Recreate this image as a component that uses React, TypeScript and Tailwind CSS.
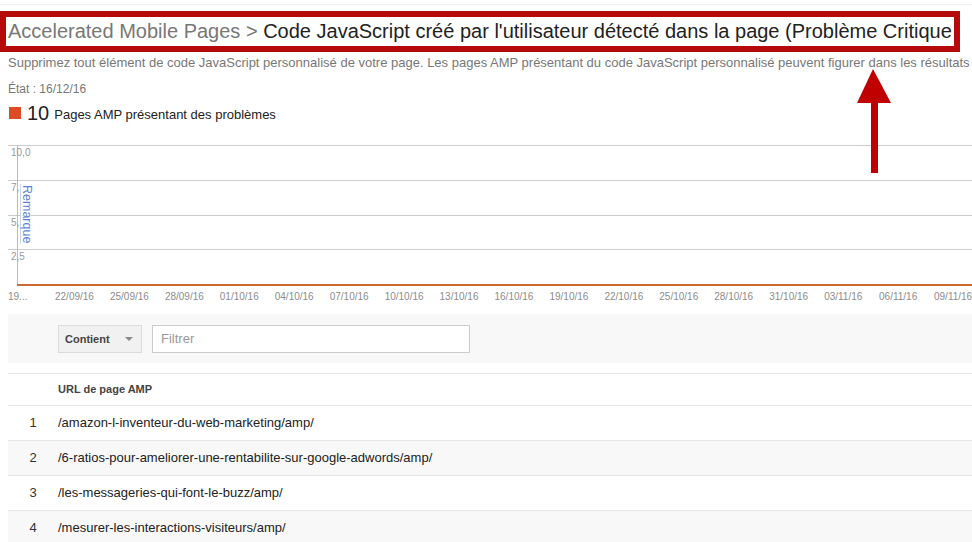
import React from "react";

const xLabels = [
  "22/09/16", "25/09/16", "28/09/16", "01/10/16", "04/10/16", "07/10/16",
  "10/10/16", "13/10/16", "16/10/16", "19/10/16", "22/10/16", "25/10/16",
  "28/10/16", "31/10/16", "03/11/16", "06/11/16", "09/11/16",
];

const rows = [
  "/amazon-l-inventeur-du-web-marketing/amp/",
  "/6-ratios-pour-ameliorer-une-rentabilite-sur-google-adwords/amp/",
  "/les-messageries-qui-font-le-buzz/amp/",
  "/mesurer-les-interactions-visiteurs/amp/",
];

function Chart() {
  return (
    <div className="relative ml-[8px] mt-[19px]">
      {/* grid bands */}
      <div className="h-[35px] border-t border-[#cccccc]" />
      <div className="h-[35px] border-t border-[#cccccc]" />
      <div className="h-[34px] border-t border-[#cccccc]" />
      <div className="h-[35px] border-t border-[#cccccc]" />
      <div className="ml-[9px] h-[2px] bg-[#cf6a35]" />

      {/* y axis */}
      <div className="absolute left-[9px] top-0 h-[139px] w-px bg-[#bbbbbb]" />
      <span className="absolute left-[3px] top-[2px] text-[10px] leading-[12px] text-[#999]">10,0</span>
      <span className="absolute left-[3px] top-[37px] text-[10px] leading-[12px] text-[#999]">7,</span>
      <span className="absolute left-[3px] top-[72px] text-[10px] leading-[12px] text-[#999]">5,</span>
      <span className="absolute left-[3px] top-[106px] text-[10px] leading-[12px] text-[#999]">2,5</span>

      {/* annotation label */}
      <div className="absolute left-[12px] top-[39px] flex h-[60px] w-[11px] items-center justify-center border-l border-[#c9d7f3] bg-white/80">
        <span className="text-[12.5px] leading-[11px] text-[#5b82d6] [writing-mode:vertical-rl]">Remarque</span>
      </div>

      {/* x labels */}
      <div className="mt-[5px] flex text-[10px] leading-[12px] text-[#8c8c8c]">
        <span className="w-[47px] shrink-0">19...</span>
        {xLabels.map((l) => (
          <span key={l} className="w-[54.94px] shrink-0 whitespace-nowrap">
            {l}
          </span>
        ))}
      </div>
    </div>
  );
}

export default function App() {
  return (
    <div className="relative h-[542px] w-[972px] overflow-hidden bg-white font-['Liberation_Sans',Arial,sans-serif]">
      <div className="h-[5px] border-b border-[#eeeeee]" />

      {/* highlighted title */}
      <div className="mt-[6px] h-[41px] w-[960px] border-[6px] border-[#b40a0a] pl-[2px]">
        <h1 className="whitespace-nowrap text-[20px] leading-[29px] text-[#222]">
          <span className="text-[#777]">Accelerated Mobile Pages &gt; </span>
          Code JavaScript créé par l'utilisateur détecté dans la page (Problème Critique
        </h1>
      </div>

      <p className="h-[22px] whitespace-nowrap pl-[8px] text-[13px] leading-[22px] text-[#777]">
        Supprimez tout élément de code JavaScript personnalisé de votre page. Les pages AMP présentant du code JavaScript personnalisé peuvent figurer dans les résultats
      </p>
      <p className="h-[26px] pl-[8px] pt-[2px] text-[12px] leading-[26px] text-[#777]">État : 16/12/16</p>

      <div className="flex h-[26px] items-center pl-[9px]">
        <span className="h-[12px] w-[12px] bg-[#dd4b22]" />
        <span className="ml-[6px] text-[20px] leading-[26px] text-[#222]">10</span>
        <span className="ml-[5px] mt-[4px] text-[13px] text-[#222]">Pages AMP présentant des problèmes</span>
      </div>

      <Chart />

      {/* filter bar */}
      <div className="ml-[8px] mt-[11px] flex h-[49px] items-center gap-[10px] bg-[#f8f8f8] pl-[50px]">
        <div className="flex h-[28px] w-[84px] items-center justify-between border border-[#dcdcdc] bg-[#f1f1f1] pl-[6px] pr-[8px]">
          <span className="mt-[1px] text-[11px] font-bold text-[#444]">Contient</span>
          <span className="h-0 w-0 border-x-[4px] border-t-[4px] border-x-transparent border-t-[#888]" />
        </div>
        <div className="flex h-[28px] w-[318px] items-center border border-[#cccccc] bg-white px-[8px]">
          <span className="text-[13px] text-[#999]">Filtrer</span>
        </div>
      </div>

      {/* table */}
      <div className="ml-[8px] mt-[10px]">
        <div className="flex h-[33px] items-center border-y border-[#e5e5e5] pl-[50px]">
          <span className="text-[11px] font-bold text-[#444]">URL de page AMP</span>
        </div>
        {rows.map((r, i) => (
          <div
            key={r}
            className={`flex h-[35px] items-center border-b border-[#e5e5e5] text-[13px] text-[#222] ${i % 2 === 1 ? "bg-[#f8f8f8]" : "bg-white"}`}
          >
            <span className="w-[50px] shrink-0 text-center text-[#333]">{i + 1}</span>
            <span>{r}</span>
          </div>
        ))}
      </div>

      {/* red arrow annotation */}
      <svg className="absolute left-[855px] top-[67px]" width="40" height="110" viewBox="0 0 40 110">
        <polygon points="18,2 2,36 36,36" fill="#c00000" />
        <rect x="16" y="34" width="7" height="72" fill="#c00000" />
      </svg>
    </div>
  );
}
